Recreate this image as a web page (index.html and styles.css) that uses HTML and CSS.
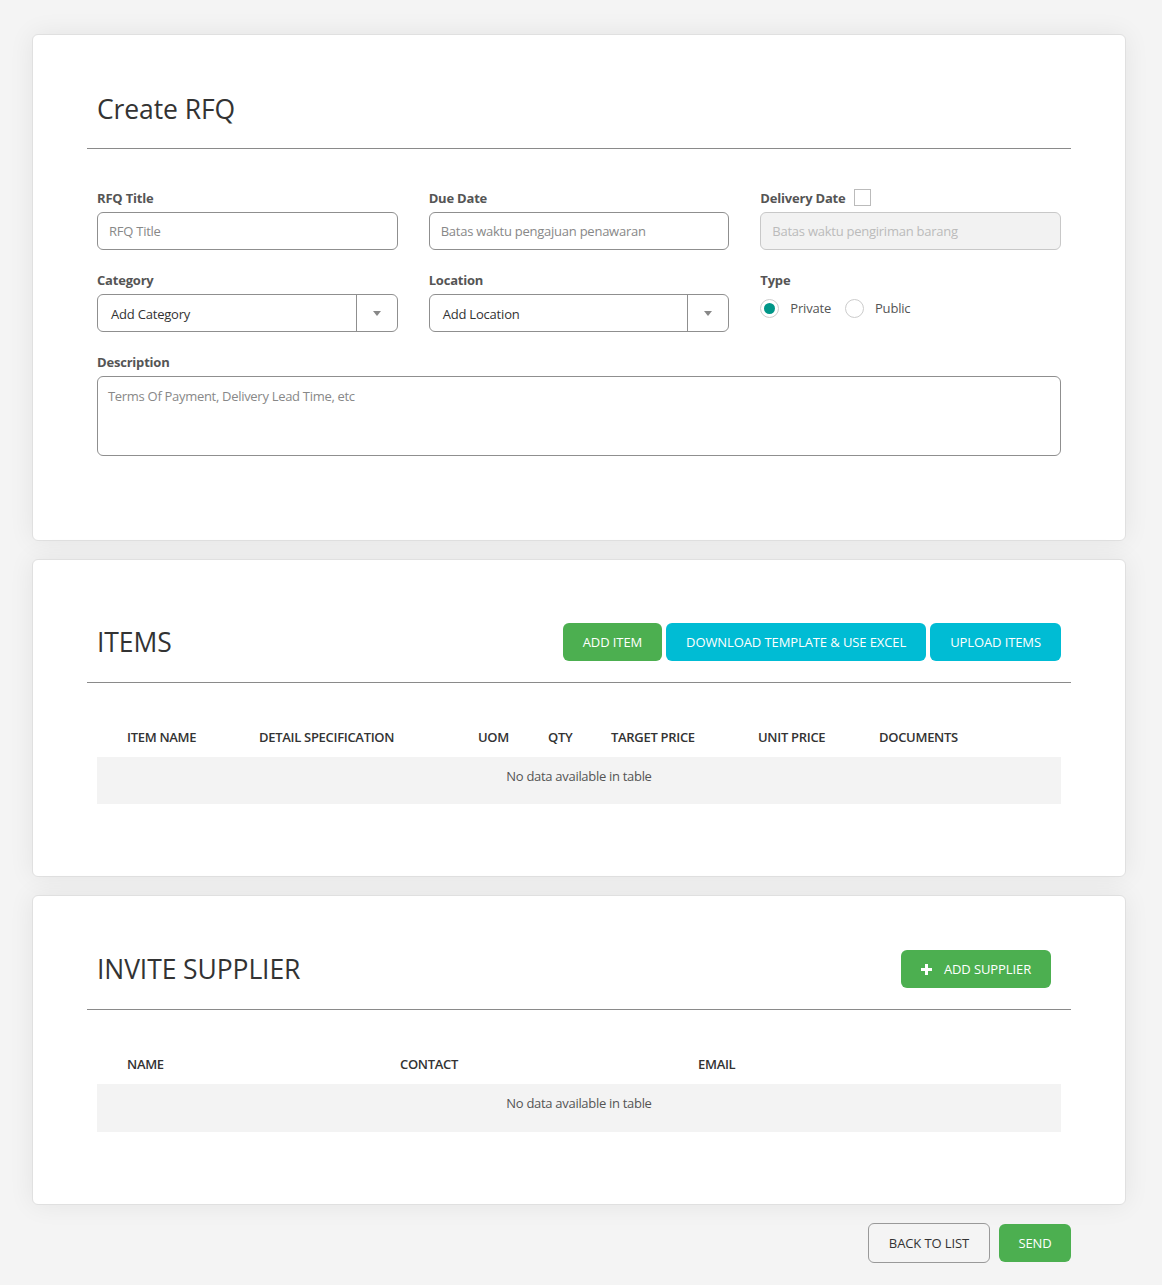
FILE: index.html
```html
<!DOCTYPE html>
<html>
<head>
<meta charset="utf-8">
<link rel="stylesheet" href="styles.css">
</head>
<body>
<div class="page">
  <section class="card card-form">
    <div class="card-head head-form">
      <h1 class="title">Create RFQ</h1>
    </div>
    <div class="form">
      <div class="field">
        <label class="label">RFQ Title</label>
        <div class="input placeholder">RFQ Title</div>
      </div>
      <div class="field">
        <label class="label">Due Date</label>
        <div class="input placeholder">Batas waktu pengajuan penawaran</div>
      </div>
      <div class="field">
        <label class="label">Delivery Date <span class="checkbox"></span></label>
        <div class="input disabled">Batas waktu pengiriman barang</div>
      </div>
      <div class="field">
        <label class="label">Category</label>
        <div class="select"><span class="select-text">Add Category</span><span class="select-arrow"><span class="caret"></span></span></div>
      </div>
      <div class="field">
        <label class="label">Location</label>
        <div class="select"><span class="select-text">Add Location</span><span class="select-arrow"><span class="caret"></span></span></div>
      </div>
      <div class="field">
        <label class="label">Type</label>
        <div class="radios">
          <span class="radio checked"></span><span class="radio-text">Private</span>
          <span class="radio"></span><span class="radio-text">Public</span>
        </div>
      </div>
      <div class="field field-wide">
        <label class="label">Description</label>
        <div class="textarea placeholder">Terms Of Payment, Delivery Lead Time, etc</div>
      </div>
    </div>
  </section>

  <section class="card card-items">
    <div class="card-head head-items">
      <h2 class="title">ITEMS</h2>
      <div class="actions">
        <span class="btn btn-green">ADD ITEM</span>
        <span class="btn btn-cyan">DOWNLOAD TEMPLATE &amp; USE EXCEL</span>
        <span class="btn btn-cyan">UPLOAD ITEMS</span>
      </div>
    </div>
    <div class="table">
      <div class="thead items-cols">
        <span>ITEM NAME</span><span>DETAIL SPECIFICATION</span><span>UOM</span><span>QTY</span><span>TARGET PRICE</span><span>UNIT PRICE</span><span>DOCUMENTS</span>
      </div>
      <div class="empty">No data available in table</div>
    </div>
  </section>

  <section class="card card-supplier">
    <div class="card-head head-supplier">
      <h2 class="title">INVITE SUPPLIER</h2>
      <div class="actions actions-supplier">
        <span class="btn btn-green btn-icon"><svg class="plus" width="11" height="11" viewBox="0 0 11 11"><path d="M4 0h3v4h4v3H7v4H4V7H0V4h4z" fill="#fff"/></svg>ADD SUPPLIER</span>
      </div>
    </div>
    <div class="table">
      <div class="thead supplier-cols">
        <span>NAME</span><span>CONTACT</span><span>EMAIL</span>
      </div>
      <div class="empty">No data available in table</div>
    </div>
  </section>

  <div class="footer">
    <span class="btn btn-outline">BACK TO LIST</span>
    <span class="btn btn-green btn-send">SEND</span>
  </div>
</div>
</body>
</html>
```

FILE: styles.css
```css
* { box-sizing: border-box; }
html, body { margin: 0; padding: 0; }
body {
  background: #f4f4f4;
  font-family: "Open Sans", "Noto Sans", "Liberation Sans", sans-serif;
  color: #333;
  width: 1162px;
  height: 1285px;
  overflow: hidden;
}
.page {
  padding: 34px 36px 0 32px;
  display: flex;
  flex-direction: column;
  gap: 18px;
}
.card {
  background: #fff;
  border: 1px solid #e0e0e0;
  border-radius: 6px;
  box-shadow: 0 0 26px rgba(0,0,0,0.07);
  padding: 0 54px;
}
.card-head {
  border-bottom: 1px solid #8a8a8a;
  padding: 0 10px;
  display: flex;
  align-items: center;
  justify-content: space-between;
}
.head-form { padding-top: 56px; padding-bottom: 21px; }
.head-items { padding-top: 63px; padding-bottom: 21px; }
.head-supplier { padding-top: 54px; padding-bottom: 21px; }
.title {
  margin: 0;
  font-size: 26.5px;
  font-weight: 400;
  line-height: 36px;
  color: #333;
  letter-spacing: -0.1px;
}
.form {
  padding: 40px 10px 84px;
  display: grid;
  grid-template-columns: 1fr 1fr 1fr;
  column-gap: 31px;
  row-gap: 21px;
}
.field-wide { grid-column: 1 / 4; }
.label {
  display: flex;
  align-items: center;
  gap: 8px;
  height: 18px;
  font-size: 13px;
  font-weight: 700;
  color: #555;
  margin-bottom: 5px;
  letter-spacing: -0.2px;
}
.checkbox {
  width: 17px;
  height: 17px;
  border: 1px solid #bbb;
  background: #fff;
  display: inline-block;
  margin-top: -2px;
}
.input {
  height: 38px;
  border: 1px solid #8f8f8f;
  border-radius: 6px;
  padding: 0 11px;
  display: flex;
  align-items: center;
  font-size: 13px;
  color: #999;
  letter-spacing: -0.25px;
}
.input.placeholder { color: #888; }
.input.disabled {
  background: #f2f2f2;
  border-color: #c8c8c8;
  color: #bbb;
}
.select {
  height: 38px;
  margin-top: 1px;
  border: 1px solid #8f8f8f;
  border-radius: 6px;
  display: flex;
  align-items: stretch;
  font-size: 13px;
  color: #333;
}
.select-text {
  flex: 1;
  display: flex;
  align-items: center;
  padding-left: 13px;
  padding-top: 2px;
  letter-spacing: -0.2px;
}
.select-arrow {
  width: 41px;
  border-left: 1px solid #8f8f8f;
  display: flex;
  align-items: center;
  justify-content: center;
}
.caret {
  width: 0;
  height: 0;
  border-left: 4px solid transparent;
  border-right: 4px solid transparent;
  border-top: 5px solid #888;
}
.radios {
  height: 38px;
  display: flex;
  align-items: center;
  margin-top: -5px;
  font-size: 13px;
  color: #555;
}
.radio {
  width: 19px;
  height: 19px;
  border-radius: 50%;
  border: 1px solid #ccc;
  background: #fff;
  display: inline-flex;
  align-items: center;
  justify-content: center;
}
.radio.checked::after {
  content: "";
  width: 11px;
  height: 11px;
  border-radius: 50%;
  background: #009688;
}
.radio-text { margin: 0 14px 0 11px; letter-spacing: -0.2px; }
.textarea {
  height: 80px;
  border: 1px solid #8f8f8f;
  border-radius: 6px;
  padding: 10px 10px;
  font-size: 13px;
  color: #888;
  letter-spacing: -0.3px;
}
.actions { display: flex; gap: 4px; }
.actions-supplier { padding-right: 10px; }
.btn {
  display: inline-flex;
  align-items: center;
  justify-content: center;
  height: 38px;
  padding: 0 20px;
  border-radius: 6px;
  font-size: 13px;
  color: #fff;
  letter-spacing: -0.1px;
  white-space: nowrap;
}
.btn-green { background: #4caf50; }
.btn-cyan { background: #00bcd4; }
.btn-icon { gap: 12px; padding: 0 19px 0 19px; width: 150px; }
.plus { display: block; }
.table { padding: 0 10px 72px; margin-top: 34px; }
.thead {
  display: grid;
  height: 40px;
  align-items: center;
  font-size: 13px;
  font-weight: 600;
  color: #333;
  letter-spacing: -0.3px;
}
.thead span { padding-left: 30px; }
.items-cols { grid-template-columns: 132px 219px 70px 63px 147px 121px 1fr; }
.supplier-cols { grid-template-columns: 273px 298px 1fr; }
.empty {
  background: #f3f3f3;
  height: 47px;
  padding-top: 9px;
  text-align: center;
  line-height: 20px;
  font-size: 13px;
  color: #555;
  letter-spacing: -0.3px;
}
.card-supplier .empty { height: 48px; }
.footer {
  display: flex;
  justify-content: flex-end;
  align-items: center;
  gap: 9px;
  padding-right: 55px;
  margin-top: 0;
}
.btn-outline {
  height: 40px;
  width: 122px;
  padding: 0;
  border: 1px solid #999;
  color: #333;
  background: transparent;
}
.btn-send { width: 72px; padding: 0; }
```
